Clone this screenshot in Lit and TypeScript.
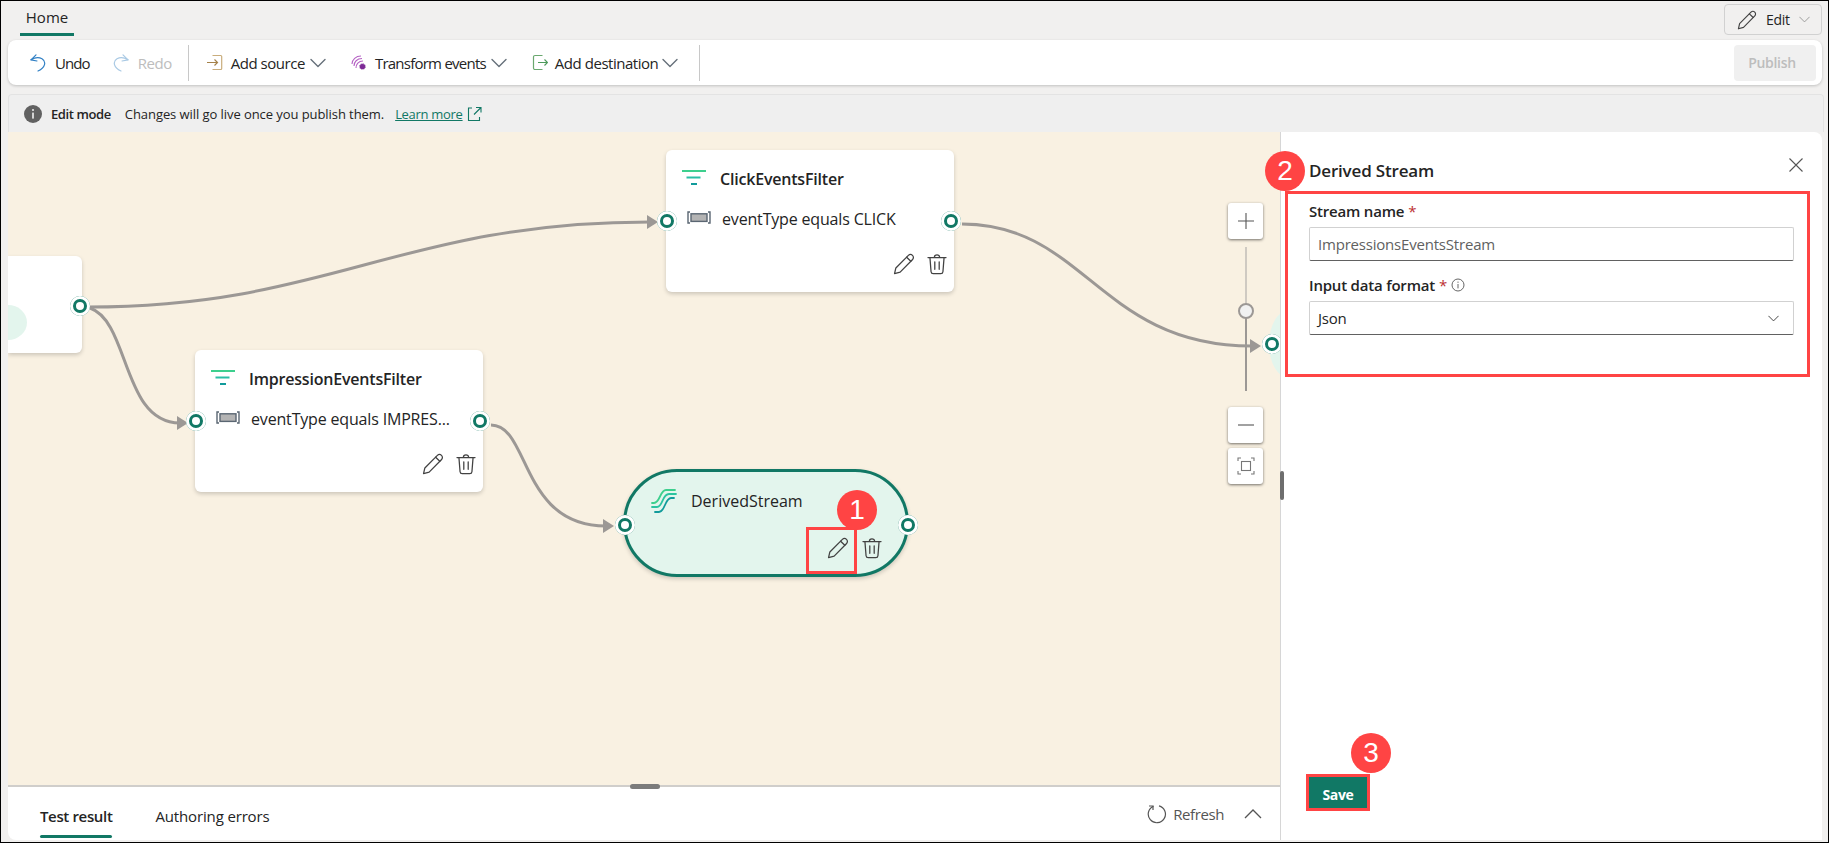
import { css, html, LitElement, svg, TemplateResult } from "lit";
import { customElement } from "lit/decorators.js";

const pencil = (size = 22): TemplateResult => html`<svg width=${size} height=${size} viewBox="0 0 20 20" fill="none" stroke="#424242" stroke-width="1.15" stroke-linejoin="round" stroke-linecap="round">
    <path d="M14 2.2a2.6 2.6 0 0 1 3.8 3.7L6.5 17.4 1.4 18.8 2.6 13.6z" /><path d="M12.4 3.8l3.8 3.7" />
</svg>`;

const trash = (size = 22): TemplateResult => html`<svg width=${size} height=${size} viewBox="0 0 20 20" fill="none" stroke="#424242" stroke-width="1.15" stroke-linecap="round">
    <path d="M7.6 4a2.4 2.4 0 0 1 4.8 0" /><path d="M1.8 4.2h16.4" /><path d="M3.6 4.4l1 12.6a2 2 0 0 0 2 1.8h6.8a2 2 0 0 0 2-1.8l1-12.6" /><path d="M8 8v6.8M12 8v6.8" />
</svg>`;

const chevron = (color = "#66707a", size = 16): TemplateResult => html`<svg width=${size} height=${size} viewBox="0 0 16 16" fill="none" stroke=${color} stroke-width="1.4" stroke-linecap="round" stroke-linejoin="round"><path d="M1 4.5l7 7 7-7" /></svg>`;

const filterIcon = html`<svg width="24" height="16" viewBox="0 0 24 16">
    <rect x="0" y="0" width="24" height="2" fill="#3dcf8e" /><rect x="4.5" y="6.5" width="14" height="2" fill="#2bbfa5" /><rect x="9" y="13" width="6" height="2" fill="#119b9b" />
</svg>`;

const fieldIcon = html`<svg width="24" height="14" viewBox="0 0 24 14" fill="none">
    <path d="M3 1H1v11h2M21 1h2v11h-2" stroke="#5a6672" stroke-width="1.4" /><rect x="4" y="2.8" width="16" height="7.6" fill="#b4b4b4" stroke="#5a6672" stroke-width="1.4" />
</svg>`;

const streamIcon = html`<svg width="26" height="26" viewBox="0 0 26 26" fill="none" stroke-width="1.8" stroke-linecap="round">
    <path d="M1 15h2C9 15 9 2 15 2h9" stroke="#3dcf8e" />
    <path d="M1 19h5C12 19 11 6 18 6h7" stroke="#2bc4a0" />
    <path d="M4 24h4C14 24 14 10 20 10h3" stroke="#119b9b" />
</svg>`;

interface FlowNode {
    name: string;
    rule: string;
    x: number;
    y: number;
}

const FILTERS: FlowNode[] = [
    { name: "ClickEventsFilter", rule: "eventType equals CLICK", x: 666, y: 150 },
    { name: "ImpressionEventsFilter", rule: "eventType equals IMPRES...", x: 195, y: 350 },
];

const EDGES = [
    "M88 307C330 307 400 222 650 222",
    "M90 308C130 322 122 423 180 423",
    "M962 224C1085 224 1100 346 1252 346",
    "M491 425C530 425 520 526 606 526",
];

const ARROWS: [number, number][] = [
    [658, 222],
    [188, 423],
    [1261, 346],
    [614, 526],
];

@customElement("app-root")
export class AppRoot extends LitElement {
    private renderFilter(node: FlowNode): TemplateResult {
        return html`<div class="node filter" style="left:${node.x - 8}px;top:${node.y - 132}px">
            <span class="port left"></span>
            <span class="port right"></span>
            <div class="node-title">${filterIcon}<span>${node.name}</span></div>
            <div class="node-rule">${fieldIcon}<span>${node.rule}</span></div>
            <div class="node-actions">${pencil()}${trash()}</div>
        </div>`;
    }

    protected render(): TemplateResult {
        return html`
            <header class="topbar">
                <div class="tab">Home</div>
                <button class="edit">${pencil(20)}<span>Edit</span>${chevron("#9a9a9a", 11)}</button>
            </header>
            <div class="toolbar">
                <div class="tool undo">
                    <svg width="16" height="18" viewBox="0 0 16 18" fill="none" stroke="#2f7fc4" stroke-width="1.2" stroke-linecap="round" stroke-linejoin="round"><path d="M6 0.8L1 5.8 7 7" /><path d="M1 5.8C5 3.4 9 3.2 12 4.8C16.4 7.4 15.6 13.6 8 17" /></svg>
                    <span>Undo</span>
                </div>
                <div class="tool redo">
                    <svg width="16" height="18" viewBox="0 0 16 18" fill="none" stroke="#a9c9e4" stroke-width="1.2" stroke-linecap="round" stroke-linejoin="round"><path d="M10 0.8L15 5.8 9 7" /><path d="M15 5.8C11 3.4 7 3.2 4 4.8C-0.4 7.4 0.4 13.6 8 17" /></svg>
                    <span>Redo</span>
                </div>
                <i class="divider"></i>
                <div class="tool menu">
                    <svg width="16" height="17" viewBox="0 0 16 17" fill="none" stroke="#a5824a" stroke-width="1.2"><path d="M5.5 1.5h8.2a1 1 0 0 1 1 1v12a1 1 0 0 1-1 1H5.5" stroke="#c9ad7c" /><path d="M0 8.5h10.5M7.5 5.5l3 3-3 3" /></svg>
                    <span>Add source</span>${chevron()}
                </div>
                <div class="tool menu transform">
                    <svg width="16" height="17" viewBox="0 0 16 17" fill="none" stroke="#b562c4" stroke-width="1.1"><path d="M1 10C1 5.5 5 2 10 2M3 12C3 8 6 4.5 11 4.5M5 14C5 10.5 7.5 7 12 7" /><circle cx="11.5" cy="12.5" r="2.6" fill="#7d2a96" stroke="#7d2a96" stroke-dasharray="1.2 0.8" stroke-width="1.2" /></svg>
                    <span>Transform events</span>${chevron()}
                </div>
                <div class="tool menu dest-tool">
                    <svg width="16" height="17" viewBox="0 0 16 17" fill="none" stroke="#6aa86f" stroke-width="1.2"><path d="M10.5 1.5H3A1.5 1.5 0 0 0 1.5 3v11A1.5 1.5 0 0 0 3 15.5h7.5" /><path d="M6 8.5h9.5M12.5 5.5l3 3-3 3" stroke="#4d9a5b" /></svg>
                    <span>Add destination</span>${chevron()}
                </div>
                <i class="divider"></i>
                <button class="publish">Publish</button>
            </div>
            <div class="info">
                <svg width="18" height="18" viewBox="0 0 18 18"><circle cx="9" cy="9" r="9" fill="#616161" /><rect x="8.2" y="7.6" width="1.6" height="6" fill="#f0f0f0" /><circle cx="9" cy="5" r="1" fill="#f0f0f0" /></svg>
                <b>Edit mode</b>
                <span class="info-text">Changes will go live once you publish them.</span>
                <a class="learn">Learn more</a>
                <svg class="learn-icon" width="15" height="16" viewBox="0 0 15 16" fill="none" stroke="#117865" stroke-width="1.1"><path d="M5 2H1.5v12.5h11V11" /><path d="M7 8.5L13.5 2M9 1.5h5v5" /></svg>
            </div>
            <div class="main">
                <div class="left">
                    <div class="canvas">
                        <svg class="edges" viewBox="8 132 1272 653" fill="none" stroke="#9c9895" stroke-width="3">
                            ${EDGES.map((d) => svg`<path d=${d} />`)}
                            ${ARROWS.map(([x, y]) => svg`<path d="M${x} ${y}l-11-7v14z" fill="#9c9895" stroke="none" />`)}
                        </svg>
                        <div class="node source">
                            <span class="port right"></span>
                            <span class="blob"></span>
                        </div>
                        ${FILTERS.map((node) => this.renderFilter(node))}
                        <div class="node derived">
                            <span class="port left"></span>
                            <span class="port right"></span>
                            <div class="node-title">${streamIcon}<span>DerivedStream</span></div>
                            <div class="node-actions">${pencil()}${trash()}</div>
                        </div>
                        <div class="edit-mark"></div>
                        <span class="badge one">1</span>
                        <div class="dest"><span class="port"></span></div>
                        <div class="zoom">
                            <button><svg width="18" height="18" viewBox="0 0 18 18" stroke="#555" stroke-width="1.1"><path d="M9 1v16M1 9h16" /></svg></button>
                            <div class="slider"><span></span></div>
                            <button><svg width="18" height="18" viewBox="0 0 18 18" stroke="#555" stroke-width="1.1"><path d="M1 9h16" /></svg></button>
                            <button><svg width="18" height="18" viewBox="0 0 18 18" fill="none" stroke="#777" stroke-width="1.1"><rect x="4.5" y="4.5" width="9" height="9" /><path d="M1 4V1h3M14 1h3v3M17 14v3h-3M4 17H1v-3" /></svg></button>
                        </div>
                    </div>
                    <div class="results">
                        <span class="grip"></span>
                        <div class="result-tab active">Test result</div>
                        <div class="result-tab">Authoring errors</div>
                        <div class="refresh">
                            <svg width="20" height="20" viewBox="0 0 20 20" fill="none" stroke="#555" stroke-width="1.2"><path d="M6.5 2.2A8.6 8.6 0 1 0 12 1.8" /><path d="M6 6V2h-4" /></svg>
                            <span>Refresh</span>
                        </div>
                        <svg class="collapse" width="18" height="18" viewBox="0 0 18 18" fill="none" stroke="#555" stroke-width="1.3"><path d="M1 13l8-8 8 8" /></svg>
                    </div>
                </div>
                <aside class="panel">
                    <span class="splitter"></span>
                    <span class="badge two">2</span>
                    <span class="badge three">3</span>
                    <div class="panel-head">
                        <h2>Derived Stream</h2>
                        <svg width="16" height="16" viewBox="0 0 16 16" stroke="#555" stroke-width="1.1"><path d="M1.5 1.5l13 13M14.5 1.5l-13 13" /></svg>
                    </div>
                    <div class="form">
                        <label>Stream name <em>*</em></label>
                        <div class="field muted">ImpressionsEventsStream</div>
                        <label>Input data format <em>*</em>
                            <svg width="14" height="14" viewBox="0 0 14 14" fill="none" stroke="#555" stroke-width="0.9"><circle cx="7" cy="7" r="6" /><path d="M7 6v4.4M7 3.6v1.2" /></svg>
                        </label>
                        <div class="field">Json ${chevron("#424242", 11)}</div>
                    </div>
                    <div class="save-mark"><button class="save">Save</button></div>
                </aside>
            </div>
        `;
    }

    static styles = css`
        :host {
            --fs: "Open Sans", "Noto Sans", "Liberation Sans", sans-serif;
            --green: #117865;
            display: flex;
            flex-direction: column;
            box-sizing: border-box;
            width: 1829px;
            height: 843px;
            border: 1px solid #000;
            background: #f1f0ef;
            font-family: var(--fs);
            color: #242424;
            overflow: hidden;
        }
        button {
            font-family: inherit;
        }
        .topbar {
            display: flex;
            justify-content: space-between;
            box-sizing: border-box;
            height: 38px;
            padding: 3px 6px 0 19px;
            flex: none;
        }
        .tab {
            width: 54px;
            height: 29px;
            line-height: 27px;
            text-align: center;
            font-size: 15px;
            font-weight: 500;
            border-bottom: 3px solid var(--green);
        }
        .edit {
            display: flex;
            align-items: center;
            gap: 9px;
            width: 98px;
            height: 31px;
            padding: 0 0 0 12px;
            box-sizing: border-box;
            background: transparent;
            border: 1px solid #d1d1d1;
            border-radius: 4px;
            font-size: 14px;
            letter-spacing: -0.3px;
            color: #242424;
        }
        .toolbar {
            display: flex;
            align-items: center;
            height: 45px;
            margin: 1px 6px 0 7px;
            padding: 0 6px 0 22px;
            background: #fff;
            border-radius: 8px;
            box-shadow: 0 1px 3px rgba(0, 0, 0, 0.2);
            flex: none;
        }
        .tool {
            display: flex;
            align-items: center;
            gap: 8px;
            font-size: 15px;
            letter-spacing: -0.47px;
            white-space: nowrap;
        }
        .undo {
            gap: 9px;
            margin-right: 23px;
            letter-spacing: -0.9px;
        }
        .redo {
            gap: 9px;
            margin-right: 16px;
            color: #bdbdbd;
        }
        .tool.menu {
            margin-right: 25px;
        }
        .tool.menu svg:last-child {
            margin-left: -3px;
        }
        .tool.transform {
            letter-spacing: -0.76px;
        }
        .tool.menu.dest-tool {
            gap: 7px;
            margin-right: 21px;
        }
        .divider {
            width: 1px;
            height: 36px;
            background: #c8c8c8;
            margin-right: 18px;
        }
        .publish {
            margin-left: auto;
            width: 82px;
            height: 36px;
            padding: 0 6px 0 0;
            background: #f0f0f0;
            border: none;
            border-radius: 4px;
            color: #bdbdbd;
            font-size: 14px;
            font-weight: 600;
            letter-spacing: -0.3px;
        }
        .info {
            display: flex;
            align-items: center;
            gap: 9px;
            height: 38px;
            margin: 9px 4px 0 7px;
            padding: 0 0 0 15px;
            box-sizing: border-box;
            background: #efefef;
            border: 1px solid #e3e3e3;
            border-bottom: none;
            border-radius: 4px 4px 0 0;
            font-size: 13px;
            flex: none;
        }
        .info b {
            font-weight: 600;
            letter-spacing: -0.4px;
        }
        .info-text {
            margin-left: 5px;
            letter-spacing: -0.07px;
        }
        .learn {
            margin-left: 2px;
            letter-spacing: -0.3px;
            color: var(--green);
            text-decoration: underline;
        }
        .learn-icon {
            margin-left: -5px;
        }
        .main {
            display: flex;
            flex: 1;
            min-height: 0;
            padding: 0 6px 2px 7px;
        }
        .left {
            display: flex;
            flex-direction: column;
            width: 1272px;
            flex: none;
        }
        .canvas {
            position: relative;
            flex: 1;
            overflow: hidden;
            background: #f9f1e2;
            border-bottom: 2px solid #d0cecb;
        }
        .edges {
            position: absolute;
            inset: 0;
            width: 1272px;
            height: 653px;
        }
        .node {
            position: absolute;
            box-sizing: border-box;
            background: #fff;
            border-radius: 6px;
            box-shadow: 0 2px 4px rgba(0, 0, 0, 0.18);
        }
        .source {
            left: 0;
            top: 124px;
            width: 74px;
            height: 97px;
            border-radius: 0 6px 6px 0;
        }
        .blob {
            position: absolute;
            left: -19px;
            top: 49px;
            width: 38px;
            height: 35px;
            border-radius: 50%;
            background: #e3f5ed;
        }
        .source .port.right {
            top: 40px;
            right: -8px;
        }
        .filter {
            width: 288px;
            height: 142px;
            padding: 19px 0 0 16px;
        }
        .port {
            position: absolute;
            box-sizing: border-box;
            width: 20px;
            height: 20px;
            border-radius: 50%;
            background: #fff;
            box-shadow: inset 0 0 0 3px #fff, inset 0 0 0 6px var(--green);
            z-index: 1;
        }
        .filter .port {
            top: 61px;
        }
        .port.left {
            left: -9px;
        }
        .port.right {
            right: -7px;
        }
        .node-title {
            display: flex;
            align-items: center;
            gap: 14px;
            font-size: 16px;
            font-weight: 600;
            letter-spacing: -0.2px;
            height: 20px;
        }
        .filter .node-title svg {
            margin-top: -3px;
        }
        .node-rule {
            display: flex;
            align-items: center;
            gap: 11px;
            margin: 19px 0 0 5px;
            font-size: 16px;
            letter-spacing: -0.17px;
            height: 22px;
        }
        .node-rule svg {
            margin-top: -3px;
        }
        .node-actions {
            position: absolute;
            right: 6px;
            bottom: 17px;
            display: flex;
            gap: 11px;
        }
        .derived {
            left: 615px;
            top: 337px;
            width: 286px;
            height: 108px;
            padding: 16px 0 0 25px;
            background: #e3f5ed;
            border: 3px solid var(--green);
            border-radius: 54px;
        }
        .derived .port {
            top: 43px;
        }
        .derived .port.left {
            left: -11px;
        }
        .derived .port.right {
            right: -12px;
        }
        .derived .node-title {
            font-weight: 500;
            letter-spacing: 0;
            height: 26px;
        }
        .derived .node-actions {
            right: 23px;
            bottom: 15px;
            gap: 12px;
        }
        .edit-mark {
            position: absolute;
            left: 798px;
            top: 395px;
            width: 51px;
            height: 47px;
            box-sizing: border-box;
            border: 3px solid #ff4444;
        }
        .badge {
            position: absolute;
            width: 40px;
            height: 40px;
            border-radius: 50%;
            background: #ff4444;
            color: #fff;
            font-family: "Liberation Sans", sans-serif;
            font-size: 28px;
            line-height: 40px;
            text-align: center;
            z-index: 3;
        }
        .one {
            left: 829px;
            top: 358px;
        }
        .two {
            left: -16px;
            top: 19px;
        }
        .three {
            left: 70px;
            top: 601px;
        }
        .dest {
            position: absolute;
            left: 1261px;
            top: 178px;
            width: 40px;
            height: 68px;
            border-radius: 50%;
            background: #e3f5ed;
        }
        .dest .port {
            left: -7px;
            top: 24px;
        }
        .zoom {
            position: absolute;
            left: 1220px;
            top: 71px;
            display: flex;
            flex-direction: column;
            width: 35px;
            gap: 5px;
        }
        .zoom button {
            display: flex;
            align-items: center;
            justify-content: center;
            width: 35px;
            height: 36px;
            padding: 0;
            background: #fff;
            border: none;
            border-radius: 3px;
            box-shadow: 0 1px 3px rgba(0, 0, 0, 0.55);
        }
        .slider {
            position: relative;
            width: 2px;
            height: 144px;
            margin: 3px auto 11px;
            background: linear-gradient(#cfcac2 44%, #9c9895 44%);
        }
        .slider span {
            position: absolute;
            left: -7px;
            top: 56px;
            width: 12px;
            height: 12px;
            border: 2px solid #9c9895;
            border-radius: 50%;
            background: #f1f1f1;
        }
        .results {
            position: relative;
            display: flex;
            align-items: center;
            gap: 43px;
            box-sizing: border-box;
            height: 53px;
            padding: 0 18px 0 32px;
            background: #fff;
            border-radius: 0 0 0 8px;
            flex: none;
        }
        .grip {
            position: absolute;
            left: 622px;
            top: -3px;
            width: 30px;
            height: 5px;
            border-radius: 3px;
            background: #7c7c7c;
        }
        .result-tab {
            position: relative;
            top: 3px;
            font-size: 15px;
            letter-spacing: -0.15px;
            line-height: 53px;
        }
        .result-tab.active {
            font-weight: 600;
            letter-spacing: -0.35px;
        }
        .result-tab.active::after {
            content: "";
            position: absolute;
            left: 0;
            right: 0;
            bottom: 5px;
            height: 3px;
            border-radius: 2px;
            background: var(--green);
        }
        .refresh {
            display: flex;
            align-items: center;
            gap: 6px;
            margin-left: auto;
            font-size: 15px;
            letter-spacing: -0.4px;
            color: #555;
        }
        .collapse {
            margin-left: -23px;
        }
        .panel {
            position: relative;
            display: flex;
            flex-direction: column;
            flex: 1;
            box-sizing: border-box;
            background: #fff;
            border-left: 1px solid #d6d6d6;
            border-radius: 0 8px 0 0;
        }
        .splitter {
            position: absolute;
            left: -1px;
            top: 339px;
            width: 4px;
            height: 29px;
            border-radius: 2px;
            background: #6e6e6e;
        }
        .panel-head {
            display: flex;
            align-items: flex-start;
            justify-content: space-between;
            height: 59px;
            padding: 25px 18px 0 28px;
            box-sizing: border-box;
            flex: none;
        }
        .panel-head h2 {
            margin: 3px 0 0;
            font-size: 17px;
            line-height: 22px;
            font-weight: 600;
            letter-spacing: -0.18px;
        }
        .form {
            display: flex;
            flex-direction: column;
            box-sizing: border-box;
            width: 525px;
            height: 186px;
            margin-left: 4px;
            padding: 7px 13px 0 21px;
            border: 3px solid #ff4444;
            flex: none;
        }
        label {
            display: flex;
            align-items: center;
            gap: 4px;
            height: 20px;
            font-size: 15px;
            font-weight: 600;
            letter-spacing: -0.2px;
        }
        label em {
            color: #bc2f32;
            font-style: normal;
            font-weight: 400;
        }
        .field {
            display: flex;
            align-items: center;
            justify-content: space-between;
            box-sizing: border-box;
            height: 34px;
            margin: 6px 0 14px;
            padding: 0 14px 0 8px;
            border: 1px solid #d1d1d1;
            border-bottom-color: #616161;
            border-radius: 2px;
            font-size: 15px;
            letter-spacing: -0.2px;
        }
        .field.muted {
            color: #616161;
        }
        .save-mark {
            margin: auto 0 29px 25px;
            width: 64px;
            height: 37px;
            box-sizing: border-box;
            border: 3px solid #ff4444;
            flex: none;
        }
        .save {
            width: 100%;
            height: 100%;
            padding: 3px 0 0;
            border: none;
            background: var(--green);
            color: #fff;
            font-size: 14px;
            font-weight: 700;
            letter-spacing: -0.3px;
        }
    `;
}
